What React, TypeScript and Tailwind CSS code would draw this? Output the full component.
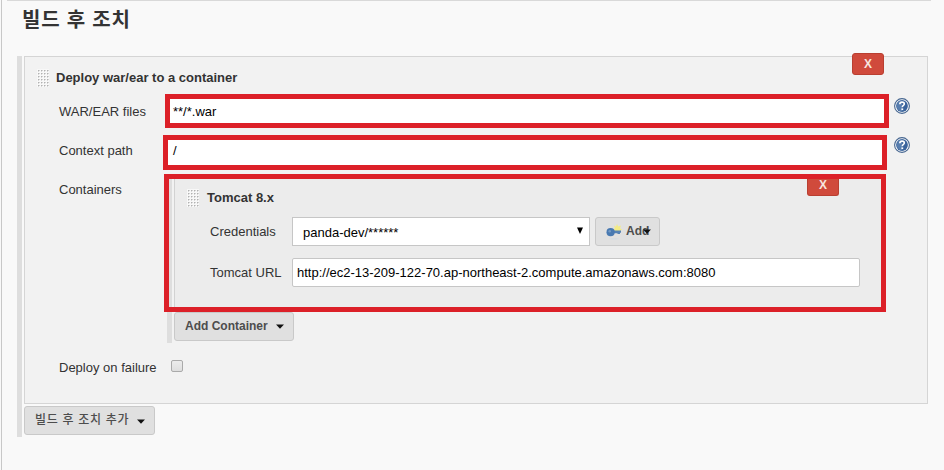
import React from "react";

function Grip() {
  return (
    <svg width="12" height="18" className="shrink-0" aria-hidden="true">
      <defs>
        <pattern id="grip" width="3" height="3" patternUnits="userSpaceOnUse">
          <rect width="3" height="3" fill="#f8f8f8" />
          <rect x="1" y="1" width="1" height="1" fill="#b2b2b2" />
          <rect x="2" y="1" width="1" height="1" fill="#d4d4d4" />
          <rect x="1" y="2" width="1" height="1" fill="#d8d8d8" />
        </pattern>
      </defs>
      <rect width="12" height="18" fill="url(#grip)" />
    </svg>
  );
}

function Caret() {
  return (
    <svg width="8" height="5" className="shrink-0" aria-hidden="true">
      <path d="M0 .4h8L4 4.8z" fill="#111" />
    </svg>
  );
}

function Help() {
  return (
    <svg width="16" height="16" viewBox="0 0 16 16" className="block" aria-hidden="true">
      <circle cx="8" cy="8" r="7.4" fill="#fff" stroke="#45658f" strokeWidth="1.1" />
      <circle cx="8" cy="8" r="5.9" fill="#3a639b" />
      <path d="M3 6.5A5.3 5.3 0 0 1 8 2.6v10.8A5.4 5.4 0 0 1 3 6.5z" fill="#6c91bd" opacity=".6" />
      <path d="M5.8 6.2c.1-1.5 1-2.1 2.3-2.1 1.3 0 2.2.7 2.2 1.8 0 1.5-2 1.6-2 3.3" fill="none" stroke="#fff" strokeWidth="1.6" />
      <rect x="7.4" y="10.4" width="1.8" height="1.7" fill="#fff" />
    </svg>
  );
}

function KeyIcon() {
  return (
    <svg width="16" height="16" viewBox="0 0 16 16" className="shrink-0" aria-hidden="true">
      <ellipse cx="8" cy="14.8" rx="5" ry=".6" fill="#d0dae4" />
      <path d="M11 0l1.200 2.600 2.800-1-1 2.700 2 1.200-2 1.500H9L7 5.500l2-1.200-1-2.700 2 1z" fill="#f3eb86" />
      <path d="M6 6.500h9v2.300h-1v1.200h-2.500V9.300H6z" fill="#5582b5" />
      <circle cx="4.600" cy="8.200" r="4.100" fill="#4879b1" />
      <circle cx="3.700" cy="7.300" r="1.300" fill="#7299c4" />
    </svg>
  );
}

const button =
  "flex items-center rounded-[3px] border border-[#c9c9c9] bg-[#e0e0e0] font-bold text-[#4d4d4d]";

type HelpRowProps = { label: string; labelClass: string; value: string; box: string; help: string };

function HelpRow({ label, labelClass, value, box, help }: HelpRowProps) {
  return (
    <div className="flex items-start">
      <div className={"w-[104px] shrink-0 leading-4 " + labelClass}>{label}</div>
      <div className={"flex shrink-0 items-center border-5 border-[#dc2028] bg-white text-black " + box}>{value}</div>
      <div className={help}><Help /></div>
    </div>
  );
}

export default function App() {
  return (
    <div className="h-[470px] w-[944px] overflow-hidden bg-[#f9f9f9] font-['Liberation_Sans','Noto_Sans_CJK_KR',sans-serif] text-[13px] text-[#333]">
      <div className="ml-px h-full border-l border-[#c8c8c8]">
        <div className="ml-[5px] h-px w-[924px] bg-[#d9d9d9]" />
        <h1 className="ml-5 h-[55px] pt-[5px] text-[20px] leading-7 font-bold tracking-[0.8px]">빌드 후 조치</h1>

        <div className="ml-[15px] flex h-[381px] w-[911px] gap-[2px]">
          <div className="w-[5px] shrink-0 bg-[#dedede]" />
          <div className="w-[904px]">
            <section className="h-[348px] border border-[#d5d5d5] bg-[#f2f2f2]">
              <header className="flex h-[37px] items-start pl-3">
                <div className="pt-[12px]"><Grip /></div>
                <h2 className="ml-[7px] pt-[13px] leading-4 font-bold">Deploy war/ear to a container</h2>
                <button className="-mt-1 mr-[43px] ml-auto h-[22px] w-8 rounded-[3px] border border-[#b93f31] bg-[#d04a3c] text-xs leading-5 font-bold text-[#f8e4df]">X</button>
              </header>

              <div className="pl-[34px]">
                <HelpRow label="WAR/EAR files" labelClass="pt-[10px]" value="**/*.war" box="ml-[2px] h-[34px] w-[724px] pt-px pl-[3px]" help="mt-1 ml-[5px]" />
                <div className="mt-[7px]">
                  <HelpRow label="Context path" labelClass="pt-2" value="/" box="h-[35px] w-[724px] pb-[3px] pl-[5px]" help="mt-[2px] ml-[7px]" />
                </div>

                <div className="mt-1 flex items-start">
                  <div className="w-[105px] shrink-0 pt-2 leading-4">Containers</div>
                  <div className="w-[722px]">
                    <div className="flex h-[138px] gap-[2px] border-5 border-[#dc2028] bg-[#f2f2f2]">
                      <div className="w-[3px] shrink-0 bg-[#dedede]" />
                      <div className="w-[707px] border-l border-[#d2d2d2] bg-[#ececec]">
                        <header className="flex h-[38px] items-start pl-3">
                          <div className="pt-[10px]"><Grip /></div>
                          <h3 className="ml-[8px] pt-[11px] leading-4 font-bold">Tomcat 8.x</h3>
                          <button className="mr-[42px] ml-auto flex h-[17px] w-8 justify-center rounded-b-[3px] border border-t-0 border-[#b93f31] bg-[#d04a3c] text-xs leading-3 font-bold text-[#f8e4df]">X</button>
                        </header>
                        <div className="flex h-[29px] items-center pl-[35px]">
                          <div className="w-[82px] shrink-0">Credentials</div>
                          <div className="flex h-[29px] w-[298px] items-center justify-between border border-[#c6c6c6] bg-white pr-[6px] pl-[10px] text-black">
                            <span className="pt-[2px]">panda-dev/******</span>
                            <svg width="6" height="7" className="mb-[3px]" aria-hidden="true"><path d="M0 .5h6L3 7z" /></svg>
                          </div>
                          <button className={button + " ml-[5px] h-[29px] w-[65px] pl-[10px]"}>
                            <KeyIcon />
                            <span className="ml-[4px] pb-px text-xs">Add</span>
                            <span className="-ml-[6px]"><Caret /></span>
                          </button>
                        </div>
                        <div className="mt-3 flex h-[29px] items-center pl-[35px]">
                          <div className="w-[82px] shrink-0">Tomcat URL</div>
                          <div className="flex h-[29px] w-[568px] items-center rounded-[2px] border border-[#c6c6c6] bg-white pl-1 text-black">
                            http://ec2-13-209-122-70.ap-northeast-2.compute.amazonaws.com:8080
                          </div>
                        </div>
                      </div>
                    </div>
                    <div className="ml-[3px] flex h-[31px] gap-[2px]">
                      <div className="w-[5px] bg-[#dedede]" />
                      <button className={button + " h-[29px] w-[120px] pb-px pl-[10px] text-xs"}>
                        <span>Add Container</span>
                        <span className="mt-px ml-2"><Caret /></span>
                      </button>
                    </div>
                  </div>
                </div>

                <div className="mt-[16px] flex h-4 items-center">
                  <div className="w-[112px] pt-[2px] leading-4">Deploy on failure</div>
                  <div className="mb-[2px] size-3 rounded-[2px] border border-[#aaa] bg-linear-to-b from-[#ececec] to-[#dedede]" />
                </div>
              </div>
            </section>
            <button className={button + " mt-[2px] h-[29px] w-[131px] pb-px pl-[10px] text-xs"}>
              <span className="font-medium tracking-[0.7px]">빌드 후 조치 추가</span>
              <span className="mt-[2px] ml-2"><Caret /></span>
            </button>
          </div>
        </div>
      </div>
    </div>
  );
}
